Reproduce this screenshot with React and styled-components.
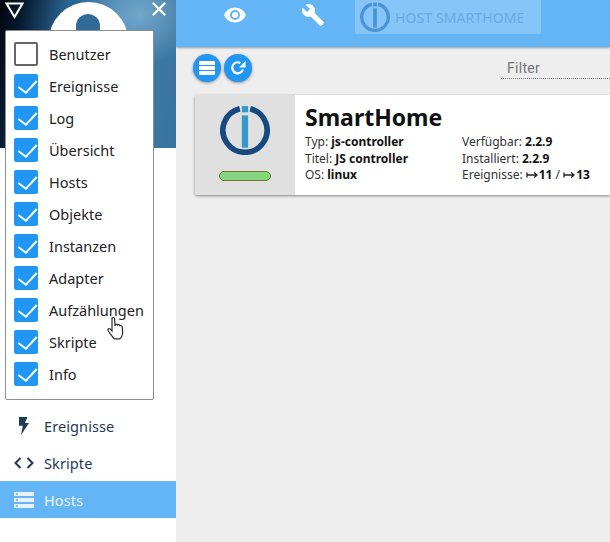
import React from 'react';
import styled, { createGlobalStyle } from 'styled-components';
import { X } from 'lucide-react';

const GlobalStyle = createGlobalStyle`
    html, body {
        margin: 0;
        height: 100%;
        overflow: hidden;
        background: #eeeeee;
        font-family: "Noto Sans", "Open Sans", sans-serif;
    }
    #root {
        height: 100%;
    }
`;

const Page = styled.div`
    width: 610px;
    height: 542px;
    display: flex;
    position: relative;
    overflow: hidden;
`;

const Sidebar = styled.div`
    width: 176px;
    flex-shrink: 0;
    background: #ffffff;
    display: flex;
    flex-direction: column;
`;

const SideHeader = styled.div`
    height: 148px;
    flex-shrink: 0;
    position: relative;
    overflow: hidden;
    background:
        radial-gradient(ellipse 60px 50px at 140px 15px, rgba(150, 195, 225, 0.6), transparent 100%),
        linear-gradient(100deg, #03060c 0%, #071a30 12%, #2a6592 34%, #3e7fae 60%, #3a729c 100%);
`;

const HeaderLogo = styled.svg`
    position: absolute;
    left: 38px;
    top: 2px;
    width: 102px;
    height: 102px;
`;

const MenuToggle = styled.svg`
    position: absolute;
    left: 5px;
    top: 2px;
    width: 19px;
    height: 17px;
`;

const CloseButton = styled.div`
    position: absolute;
    left: 148px;
    top: -2px;
    color: #ffffff;
    line-height: 0;
`;

const NavList = styled.div`
    flex: 1;
    display: flex;
    flex-direction: column;
    justify-content: flex-end;
    padding-bottom: 24px;
`;

const NavItem = styled.div`
    height: 37px;
    display: flex;
    align-items: center;
    gap: 10px;
    padding-left: 14px;
    font-size: 14.5px;
    letter-spacing: 0.1px;
    color: ${(p) => (p.$active ? '#e8f3fd' : '#1e3a55')};
    background: ${(p) => (p.$active ? '#64b5f6' : 'transparent')};
`;

const NavIcon = styled.svg`
    width: 20px;
    height: 20px;
    fill: currentColor;
    flex-shrink: 0;
`;

const Popup = styled.div`
    position: absolute;
    left: 5px;
    top: 30px;
    width: 149px;
    height: 370px;
    box-sizing: border-box;
    padding: 7px 0 0 8px;
    background: #ffffff;
    border: 1px solid #8d8d8d;
    border-radius: 2px;
    z-index: 5;
`;

const PopupRow = styled.div`
    height: 32px;
    display: flex;
    align-items: center;
    gap: 11px;
    font-size: 14.5px;
    color: #222222;
    white-space: nowrap;
`;

const CheckBox = styled.div`
    width: 24px;
    height: 24px;
    box-sizing: border-box;
    border-radius: 2px;
    flex-shrink: 0;
    display: flex;
    color: #ffffff;
    background: ${(p) => (p.$checked ? '#2196f3' : '#ffffff')};
    border: ${(p) => (p.$checked ? 'none' : '2px solid #666666')};
`;

const Cursor = styled.svg`
    position: absolute;
    left: 106px;
    top: 316px;
    width: 20px;
    height: 26px;
    z-index: 6;
`;

const Main = styled.div`
    flex: 1;
    min-width: 0;
    display: flex;
    flex-direction: column;
`;

const TopBar = styled.div`
    height: 47px;
    flex-shrink: 0;
    background: #64b5f6;
    box-shadow: 0 1px 2px rgba(0, 0, 0, 0.35);
    display: flex;
    align-items: flex-start;
    padding-left: 47px;
`;

const TopIcon = styled.svg`
    width: 24px;
    height: 24px;
    margin-top: 3px;
    margin-right: 54px;
    fill: #ffffff;
    flex-shrink: 0;
`;

const HostTab = styled.div`
    width: 186px;
    height: 34px;
    box-sizing: border-box;
    margin-left: -24px;
    padding-left: 5px;
    background: rgba(255, 255, 255, 0.22);
    border-radius: 0 0 2px 2px;
    display: flex;
    align-items: center;
    gap: 5px;
    color: #6aa9e4;
    font-size: 14px;
    letter-spacing: 0.1px;
    white-space: nowrap;
`;

const Toolbar = styled.div`
    height: 40px;
    flex-shrink: 0;
    display: flex;
    align-items: center;
    justify-content: space-between;
    padding: 1px 0 0 17px;
`;

const ToolButtons = styled.div`
    display: flex;
    gap: 3px;
`;

const RoundButton = styled.div`
    width: 28px;
    height: 28px;
    border-radius: 50%;
    background: #2196f3;
    box-shadow: 0 1px 3px rgba(0, 0, 0, 0.4);
    display: flex;
    align-items: center;
    justify-content: center;
`;

const FilterBox = styled.div`
    width: 109px;
    height: 20px;
    margin-top: 1px;
    box-sizing: border-box;
    padding-left: 6px;
    border-bottom: 1px dotted #777777;
    font-family: "Roboto", sans-serif;
    font-size: 14px;
    line-height: 18px;
    letter-spacing: 0.3px;
    color: #757575;
`;

const HostCard = styled.div`
    margin: 7px 0 0 19px;
    height: 100px;
    display: flex;
    background: #ffffff;
    border-radius: 2px 0 0 2px;
    box-shadow: 0 1px 3px rgba(0, 0, 0, 0.45);
`;

const CardLeft = styled.div`
    width: 100px;
    flex-shrink: 0;
    background: #e0e0e0;
    display: flex;
    flex-direction: column;
    align-items: center;
    padding-top: 10px;
    box-sizing: border-box;
    border-radius: 2px 0 0 2px;
`;

const StatusBar = styled.div`
    width: 52px;
    height: 10px;
    margin-top: 16px;
    box-sizing: border-box;
    background: #85d57c;
    border: 1px solid #6f7a33;
    border-radius: 5px;
`;

const CardBody = styled.div`
    flex: 1;
    min-width: 0;
    padding: 9px 0 0 10px;
    color: #333333;
`;

const CardTitle = styled.div`
    font-size: 23px;
    font-weight: 700;
    line-height: 27px;
    color: #111111;
    margin-bottom: 3px;
`;

const InfoGrid = styled.div`
    display: grid;
    grid-template-columns: 157px 1fr;
    font-size: 12px;
    line-height: 16.6px;
    white-space: nowrap;
`;

const InfoValue = styled.b`
    font-weight: 700;
    color: #111111;
`;

const Arrow = styled.svg`
    width: 12px;
    height: 8px;
    margin-right: 1px;
    fill: none;
    stroke: #222222;
    stroke-width: 1.3;
`;

const popupItems = [
    ['Benutzer', false],
    ['Ereignisse', true],
    ['Log', true],
    ['Übersicht', true],
    ['Hosts', true],
    ['Objekte', true],
    ['Instanzen', true],
    ['Adapter', true],
    ['Aufzählungen', true],
    ['Skripte', true],
    ['Info', true],
];

const LogoRing = ({ size, ring, bar }) => (
    <svg width={size} height={size} viewBox="0 0 48 48">
        <path d="M19 3.6 A21.2 21.2 0 1 0 29 3.6" fill="none" stroke={ring} strokeWidth="5.4" />
        <rect x="21" y="1" width="6" height="6" fill={bar} />
        <rect x="21" y="10" width="6" height="31" fill={bar} />
    </svg>
);

const RightArrow = () => (
    <Arrow viewBox="0 0 12 8">
        <path d="M1 1.5v5M1 4h10M8.2 1.5 11 4 8.2 6.5" />
    </Arrow>
);

const App = () => {
    return (
        <Page>
            <GlobalStyle />
            <Sidebar>
                <SideHeader>
                    <HeaderLogo viewBox="0 0 102 102">
                        <circle cx="50.5" cy="40" r="40" fill="#ffffff" />
                        <rect x="38" y="12" width="24" height="80" rx="12" fill="#2f6b96" />
                    </HeaderLogo>
                    <MenuToggle viewBox="0 0 19 17">
                        <path d="M1.5 1.5h16L9.5 15z" fill="none" stroke="#ffffff" strokeWidth="2" />
                    </MenuToggle>
                    <CloseButton>
                        <X size={22} strokeWidth={2.6} />
                    </CloseButton>
                </SideHeader>
                <NavList>
                    <NavItem>
                        <NavIcon viewBox="0 0 20 20">
                            <path d="M5 1h8.500l-2.600 6H15l-8 12 1.800-9.200H5z" />
                        </NavIcon>
                        Ereignisse
                    </NavItem>
                    <NavItem>
                        <NavIcon viewBox="0 0 20 20">
                            <path d="M6.500 5 1.500 10l5 5M13.500 5l5 5-5 5" fill="none" stroke="currentColor" strokeWidth="2" />
                        </NavIcon>
                        Skripte
                    </NavItem>
                    <NavItem $active>
                        <NavIcon viewBox="0 0 20 20">
                            <path fillRule="evenodd" d="M0 2h20v4H0zM2 3.200v1.600h2V3.200zM0 8h20v4H0zM2 9.200v1.600h2V9.200zM0 14h20v4H0zM2 15.200v1.600h2v-1.600z" />
                        </NavIcon>
                        Hosts
                    </NavItem>
                </NavList>
            </Sidebar>

            <Popup>
                {popupItems.map(([name, checked]) => (
                    <PopupRow key={name}>
                        <CheckBox $checked={checked}>
                            {checked && (
                                <svg width="24" height="24" viewBox="0 0 24 24">
                                    <path d="M4.300 13 12 18.700 22.700 7" fill="none" stroke="#ffffff" strokeWidth="2" />
                                </svg>
                            )}
                        </CheckBox>
                        {name}
                    </PopupRow>
                ))}
            </Popup>
            <Cursor viewBox="0 0 20 26">
                <path
                    d="M6 2c1-1 2.500-.6 2.600 1l.4 7 .6-1.500c1-.8 2-.4 2.200.6.800-.8 2-.5 2.200.6 1-.5 2 0 2.200 1.200l.4 5c.2 3-1.400 6-3 7H8.500c-1.500-1-3-3.500-4.500-5.500L2 14.500c-.6-1.500 1-2.500 2.200-1.500L6 15z"
                    fill="#ffffff"
                    stroke="#2a2a3a"
                    strokeWidth="1.200"
                />
            </Cursor>

            <Main>
                <TopBar>
                    <TopIcon viewBox="0 0 24 24">
                        <path d="M12 4.500C7 4.500 2.700 7.600 1 12c1.700 4.400 6 7.500 11 7.500s9.300-3.100 11-7.500c-1.700-4.400-6-7.500-11-7.500zM12 17a5 5 0 1 1 0-10 5 5 0 0 1 0 10zm0-8a3 3 0 1 0 0 6 3 3 0 0 0 0-6z" />
                    </TopIcon>
                    <TopIcon viewBox="0 0 24 24">
                        <path d="M22.700 19 13.600 9.900c.9-2.300.4-5-1.500-6.900-2-2-5-2.400-7.400-1.300L9 6 6 9 1.600 4.700C.4 7.100.9 10.100 2.900 12.100c1.900 1.900 4.600 2.400 6.900 1.500l9.100 9.100c.4.400 1 .4 1.400 0l2.300-2.300c.5-.4.500-1.100.1-1.400z" />
                    </TopIcon>
                    <HostTab>
                        <LogoRing size={30} ring="#4a93d6" bar="#4a93d6" />
                        HOST SMARTHOME
                    </HostTab>
                </TopBar>

                <Toolbar>
                    <ToolButtons>
                        <RoundButton>
                            <svg width="16" height="14" viewBox="0 0 16 14">
                                <path d="M1 0h14a1 1 0 0 1 1 1v3H0V1a1 1 0 0 1 1-1zM0 5h16v4H0zM0 10h16v3a1 1 0 0 1-1 1H1a1 1 0 0 1-1-1z" fill="#ffffff" />
                            </svg>
                        </RoundButton>
                        <RoundButton>
                            <svg width="16" height="16" viewBox="0 0 16 16">
                                <path d="M13 9.500A5.500 5.500 0 1 1 10.500 3" fill="none" stroke="#ffffff" strokeWidth="2.200" />
                                <path d="M15.500 1v6.500H9z" fill="#ffffff" />
                            </svg>
                        </RoundButton>
                    </ToolButtons>
                    <FilterBox>Filter</FilterBox>
                </Toolbar>

                <HostCard>
                    <CardLeft>
                        <LogoRing size={50} ring="#164a7f" bar="#3399cc" />
                        <StatusBar />
                    </CardLeft>
                    <CardBody>
                        <CardTitle>SmartHome</CardTitle>
                        <InfoGrid>
                            <div>Typ: <InfoValue>js-controller</InfoValue></div>
                            <div>Verfügbar: <InfoValue>2.2.9</InfoValue></div>
                            <div>Titel: <InfoValue>JS controller</InfoValue></div>
                            <div>Installiert: <InfoValue>2.2.9</InfoValue></div>
                            <div>OS: <InfoValue>linux</InfoValue></div>
                            <div>
                                Ereignisse: <RightArrow /><InfoValue>11</InfoValue> / <RightArrow /><InfoValue>13</InfoValue>
                            </div>
                        </InfoGrid>
                    </CardBody>
                </HostCard>
            </Main>
        </Page>
    );
};

export default App;
